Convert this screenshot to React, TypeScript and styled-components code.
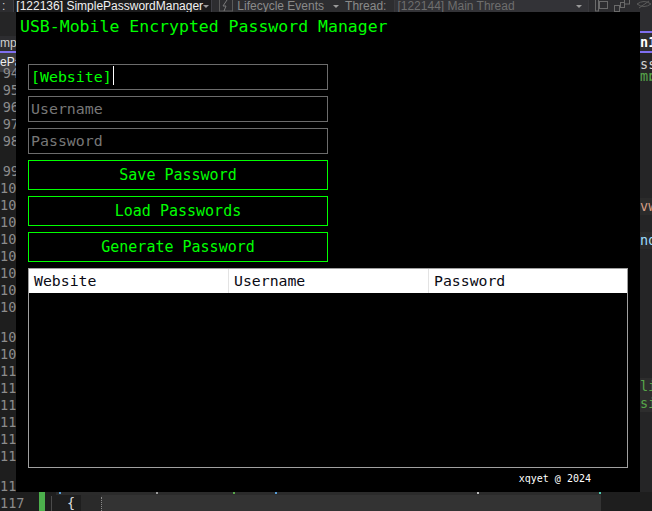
import React, { FC } from "react";
import styled, { createGlobalStyle } from "styled-components";

const GlobalStyle = createGlobalStyle`
  html, body {
    margin: 0;
    padding: 0;
    background: #1e1e1e;
    overflow: hidden;
  }
`;

const mono = `"DejaVu Sans Mono", "Liberation Mono", monospace`;
const green = "#00ff00";

const Page = styled.div`
  display: grid;
  grid-template-columns: 16px 624px 12px;
  grid-template-rows: 12px 480px 19px;
  width: 652px;
  height: 511px;
  background: #1e1e1e;
  overflow: hidden;
`;

/* ---------- IDE behind the window ---------- */

const TopBar = styled.div`
  grid-column: 1 / -1;
  display: flex;
  align-items: flex-start;
  background: #2d2d30;
  overflow: hidden;
  white-space: nowrap;
  font-family: "Liberation Sans", Arial, sans-serif;
  font-size: 12px;
  line-height: 12px;
  color: #c8c8c8;
`;

const BarText = styled.span<{ $ml?: number; $dim?: boolean }>`
  margin-left: ${(p) => p.$ml ?? 0}px;
  color: ${(p) => (p.$dim ? "#8a8a8a" : "#d0d0d0")};
`;

const Combo = styled.div<{ $w: number; $ml: number; $active?: boolean }>`
  display: flex;
  align-items: flex-start;
  justify-content: space-between;
  box-sizing: border-box;
  width: ${(p) => p.$w}px;
  height: 14px;
  margin-left: ${(p) => p.$ml}px;
  padding: 0 6px 0 2px;
  border: 1px solid ${(p) => (p.$active ? "#3f3f46" : "#3a3a3e")};
  border-top: none;
  background: ${(p) => (p.$active ? "#1b1b1c" : "#333337")};
  color: ${(p) => (p.$active ? "#f1f1f1" : "#6e6e6e")};
`;

const Arrow = styled.span<{ $ml?: number }>`
  display: inline-block;
  margin-top: 5px;
  margin-left: ${(p) => p.$ml ?? 0}px;
  width: 0;
  height: 0;
  border-left: 3px solid transparent;
  border-right: 3px solid transparent;
  border-top: 3px solid #9a9a9a;
`;

const BarIcon = styled.svg<{ $ml: number }>`
  margin-left: ${(p) => p.$ml}px;
  flex: none;
`;

const Gutter = styled.div`
  grid-column: 1;
  grid-row: 2;
  display: flex;
  flex-direction: column;
  overflow: hidden;
  font-family: ${mono};
  font-size: 13.5px;
`;

const TabStrip = styled.div<{ $h: number; $bg: string; $color?: string }>`
  flex: none;
  height: ${(p) => p.$h}px;
  line-height: ${(p) => p.$h}px;
  background: ${(p) => p.$bg};
  color: ${(p) => p.$color ?? "#cfcfcf"};
  font-family: "Liberation Sans", Arial, sans-serif;
  font-size: 12px;
  white-space: nowrap;
  overflow: hidden;
`;

const Accent = styled.div`
  flex: none;
  height: 2px;
  background: #7f6ff0;
`;

const LineList = styled.div`
  display: flex;
  flex-direction: column;
  margin-top: -7px;
`;

const LineNo = styled.div`
  flex: none;
  width: 19px;
  height: 17px;
  line-height: 17px;
  text-align: right;
  color: #8c8c8c;
  white-space: nowrap;
`;

const Lens = styled.div`
  flex: none;
  height: 13px;
`;

const RightPane = styled.div`
  grid-column: 3;
  grid-row: 2;
  display: flex;
  flex-direction: column;
  overflow: hidden;
  background: #252526;
  font-family: ${mono};
  font-size: 13.5px;
`;

const CodeBit = styled.div<{ $h: number; $color: string; $bg?: string; $bold?: boolean }>`
  flex: none;
  height: ${(p) => p.$h}px;
  line-height: ${(p) => p.$h}px;
  color: ${(p) => p.$color};
  background: ${(p) => p.$bg ?? "transparent"};
  font-weight: ${(p) => (p.$bold ? 700 : 400)};
  white-space: nowrap;
  overflow: hidden;
`;

const BottomRow = styled.div`
  grid-column: 1 / -1;
  display: flex;
  align-items: stretch;
  font-family: ${mono};
  font-size: 13.5px;
  color: #8c8c8c;
`;

const BottomNo = styled.div`
  width: 19px;
  padding-top: 3px;
  text-align: right;
  line-height: 17px;
`;

const ChangeBar = styled.div`
  width: 6px;
  margin-left: 20px;
  background: #4cb04c;
`;

const GuideLine = styled.div`
  width: 1px;
  margin: 4px 0 0 6px;
  background: #4a4a4a;
`;

const CodeStrip = styled.div`
  display: flex;
  flex-direction: column;
  margin-left: 4px;
  width: 545px;
`;

const CodeTop = styled.div`
  height: 4px;
  background: #2b2b2b;
  display: flex;
`;

const Speck = styled.span<{ $ml: number; $c: string }>`
  width: 2px;
  height: 2px;
  margin-left: ${(p) => p.$ml}px;
  background: ${(p) => p.$c};
`;

const CodeLine = styled.div`
  flex: 1;
  display: flex;
  align-items: center;
`;

const Brace = styled.span`
  color: #dcdcdc;
  margin-left: 11px;
  width: 14px;
`;

const CurrentBox = styled.div`
  align-self: stretch;
  flex: 1;
  background: #333333;
  border-left: 20px solid #2a2a2a;
  box-sizing: border-box;
  position: relative;
  &::before {
    content: "";
    position: absolute;
    left: 0;
    top: 2px;
    bottom: 0;
    border-left: 1px dotted #8a8a8a;
  }
`;

/* ---------- the app window ---------- */

const AppWindow = styled.div`
  grid-column: 2;
  grid-row: 2;
  display: flex;
  flex-direction: column;
  background: #000;
  font-family: ${mono};
`;

const Title = styled.h1`
  margin: 3px 0 0 4px;
  height: 24px;
  line-height: 24px;
  font-size: 16.5px;
  font-weight: 400;
  color: ${green};
  white-space: nowrap;
`;

const Form = styled.div`
  display: flex;
  flex-direction: column;
  gap: 6px;
  margin-top: 25px;
  padding: 0 12px;
`;

const Field = styled.div<{ $filled?: boolean }>`
  display: flex;
  align-items: center;
  box-sizing: border-box;
  width: 300px;
  height: 26px;
  padding: 0 2px;
  border: 1px solid #6c6c6c;
  font-size: 14.9px;
  color: ${(p) => (p.$filled ? green : "#777777")};
  white-space: nowrap;
`;

const Caret = styled.span`
  display: inline-block;
  width: 1px;
  height: 19px;
  margin-left: 1px;
  margin-bottom: 3px;
  background: #ffffff;
`;

const ActionButton = styled.button`
  box-sizing: border-box;
  width: 300px;
  height: 30px;
  padding: 0;
  border: 1px solid ${green};
  background: #000;
  color: ${green};
  font-family: ${mono};
  font-size: 15px;
  cursor: pointer;
`;

const Table = styled.div`
  box-sizing: border-box;
  width: 600px;
  height: 200px;
  border: 1px solid #a0a0a0;
  background: #000;
`;

const HeaderRow = styled.div`
  display: grid;
  grid-template-columns: 200px 200px 1fr;
  height: 24px;
  background: #ffffff;
`;

const HeaderCell = styled.div<{ $last?: boolean }>`
  box-sizing: border-box;
  padding-left: 5px;
  line-height: 24px;
  font-size: 14.8px;
  color: #0a0a14;
  border-right: ${(p) => (p.$last ? "none" : "1px solid #e3e3e3")};
`;

const Footer = styled.div`
  flex: 1;
  display: flex;
  align-items: center;
  justify-content: flex-end;
  padding: 0 49px 3px 0;
  font-size: 10px;
  color: #ffffff;
`;

const gutterLines: (number | null)[] = [
  94, 95, 96, 97, 98, null, 99, 100, 101, 102, 103, 104, 105, 106, 107, null,
  108, 109, 110, 111, 112, 113, 114, 115, null, 116,
];

const columns = ["Website", "Username", "Password"];
const actions = ["Save Password", "Load Passwords", "Generate Password"];

const App: FC = () => {
  return (
    <Page>
      <GlobalStyle />
      <TopBar>
        <BarText $ml={2}>:</BarText>
        <Combo $w={199} $ml={8} $active>
          [122136] SimplePasswordManager
          <Arrow />
        </Combo>
        <BarIcon $ml={7} width="14" height="12" viewBox="0 0 14 12">
          <rect x="0.5" y="-1" width="13" height="12" fill="none" stroke="#5a5a5a" />
          <path d="M8 0 L4 6 H7 L5 11" fill="none" stroke="#7a7a7a" />
        </BarIcon>
        <BarText $ml={4} $dim>Lifecycle Events</BarText>
        <Arrow $ml={9} />
        <BarText $ml={6} $dim>Thread:</BarText>
        <Combo $w={201} $ml={8}>
          [122144] Main Thread
          <Arrow />
        </Combo>
        <BarIcon $ml={6} width="14" height="12" viewBox="0 0 14 12">
          <rect x="0.5" y="-2" width="3" height="13" fill="none" stroke="#6a6a6a" />
          <rect x="4.5" y="1.5" width="8" height="7" fill="none" stroke="#6a6a6a" />
        </BarIcon>
        <BarIcon $ml={5} width="16" height="12" viewBox="0 0 16 12">
          <rect x="0.5" y="5.5" width="5" height="6" fill="none" stroke="#6a6a6a" />
          <rect x="6.5" y="2.5" width="4" height="5" fill="none" stroke="#6a6a6a" />
          <rect x="10.5" y="-1" width="5" height="5" fill="none" stroke="#6a6a6a" />
        </BarIcon>
        <BarIcon $ml={6} width="16" height="12" viewBox="0 0 16 12">
          <path d="M1 4 Q8 -1 15 4 Q8 9 1 4 Z M3 8 L13 1" fill="none" stroke="#5a5a5a" />
        </BarIcon>
      </TopBar>

      <Gutter>
        <TabStrip $h={24} $bg="#252526" />
        <TabStrip $h={15} $bg="#2d2d30">mp</TabStrip>
        <Accent />
        <TabStrip $h={19} $bg="#3d3d40" $color="#f0f0f0">
          ePa
        </TabStrip>
        <LineList>
          {gutterLines.map((n, i) =>
            n === null ? <Lens key={i} /> : <LineNo key={i}>{n}</LineNo>
          )}
        </LineList>
      </Gutter>

      <AppWindow>
        <Title>USB-Mobile Encrypted Password Manager</Title>
        <Form>
          <Field $filled>
            [Website]
            <Caret />
          </Field>
          <Field>Username</Field>
          <Field>Password</Field>
          {actions.map((a) => (
            <ActionButton key={a}>{a}</ActionButton>
          ))}
          <Table>
            <HeaderRow>
              {columns.map((c, i) => (
                <HeaderCell key={c} $last={i === columns.length - 1}>
                  {c}
                </HeaderCell>
              ))}
            </HeaderRow>
          </Table>
        </Form>
        <Footer>xqyet @ 2024</Footer>
      </AppWindow>

      <RightPane>
        <CodeBit $h={19} $color="#ccc" $bg="#2d2d30" />
        <Accent />
        <CodeBit $h={18} $color="#ffffff" $bg="#2d2d30" $bold>
          n1
        </CodeBit>
        <Accent />
        <CodeBit $h={4} $color="#ccc" />
        <CodeBit $h={14} $color="#d4d4d4">
          ssw
        </CodeBit>
        <CodeBit $h={10} $color="#57a64a">
          mp
        </CodeBit>
        <CodeBit $h={117} $color="#ccc" />
        <CodeBit $h={17} $color="#d69d85" $bg="#2b2b2b">
          vw
        </CodeBit>
        <CodeBit $h={17} $color="#ccc" />
        <CodeBit $h={17} $color="#9cdcfe" $bg="#2b2b2b">
          nd
        </CodeBit>
        <CodeBit $h={129} $color="#ccc" />
        <CodeBit $h={17} $color="#57a64a" $bg="#2d2d2d">
          li
        </CodeBit>
        <CodeBit $h={17} $color="#57a64a" $bg="#2d2d2d">
          si
        </CodeBit>
      </RightPane>

      <BottomRow>
        <BottomNo>117</BottomNo>
        <ChangeBar />
        <GuideLine />
        <CodeStrip>
          <CodeTop>
            <Speck $ml={3} $c="#569cd6" />
            <Speck $ml={95} $c="#9a9a9a" />
            <Speck $ml={75} $c="#57a64a" />
            <Speck $ml={40} $c="#569cd6" />
            <Speck $ml={200} $c="#bbbbbb" />
            <Speck $ml={120} $c="#4ec9b0" />
          </CodeTop>
          <CodeLine>
            <Brace>{"{"}</Brace>
            <CurrentBox />
          </CodeLine>
        </CodeStrip>
      </BottomRow>
    </Page>
  );
};

export default App;
